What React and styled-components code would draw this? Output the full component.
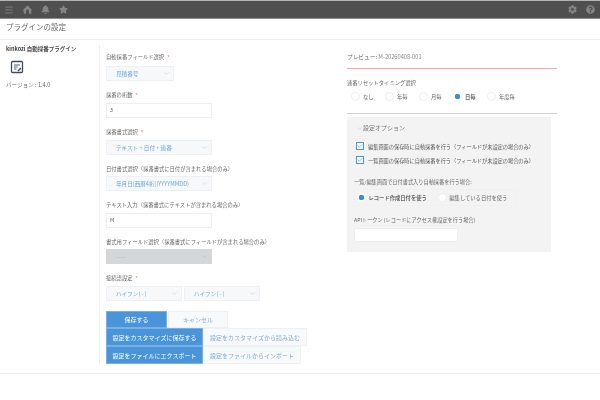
import React from "react";
import styled, { createGlobalStyle } from "styled-components";
import { Menu, ChevronDown, Check } from "lucide-react";
import { FaBell, FaStar, FaCog, FaQuestionCircle } from "react-icons/fa";

const Global = createGlobalStyle`
  html, body { margin: 0; padding: 0; background: #fff; }
  body { font-family: "Noto Sans CJK JP", "Noto Sans", sans-serif; color: #555; }
  * { box-sizing: border-box; }
`;

const Page = styled.div`width: 600px; height: 400px; overflow: hidden; background: #fff; filter: blur(0.3px);`;
const TopBar = styled.header`
  height: 19px; background: #4f4f4f; border-top: 1px solid #b5b5b5; border-bottom: 1px solid #8f8f8f;
  display: flex; align-items: center; justify-content: space-between; padding: 0 5px 0 4px; color: #858585;
`;
const IconGroup = styled.div`display: flex; align-items: center; gap: ${p => p.$gap}px;`;
const HomeGlyph = styled.svg`width: 9px; height: 9px; display: block; fill: #858585;`;
const TitleBar = styled.div`
  height: 21px; border-bottom: 1px solid #ececec; padding-left: 6px;
  font-size: 7.5px; line-height: 16px; color: #666;
`;
const Main = styled.div`display: flex; align-items: flex-start; height: 334px; border-bottom: 1px solid #ececec;`;
const Side = styled.aside`
  width: 100px; border-right: 1px solid #efefef; margin-top: 5px; padding: 0 0 0 6px; height: 319px;
`;
const PluginName = styled.div`font-size: 5.5px; font-weight: 700; color: #444; line-height: 9px;`;
const PluginIcon = styled.svg`display: block; margin: 6px 0 0 4px; width: 14px; height: 14px;`;
const Version = styled.div`font-size: 5.6px; color: #666; line-height: 8px; margin-top: 7px;`;
const Form = styled.section`width: 247px; padding: 13px 0 0 6px;`;
const Label = styled.div`font-size: 5.3px; line-height: 8px; color: #666; margin-top: ${p => p.$mt ?? 10}px;`;
const Req = styled.span`color: #f0524f; margin-left: 3px;`;
const SelectBox = styled.div`
  width: ${p => p.$w}px; height: 15px; margin-top: ${p => p.$mt ?? 3}px;
  background: ${p => p.$disabled ? "#d4d6d7" : "#f6f8fa"};
  border: 1px solid ${p => p.$disabled ? "#d4d6d7" : "#eef1f3"};
  color: ${p => p.$disabled ? "#b8bcbe" : "#6aa5dc"};
  font-size: 5.6px; display: flex; align-items: center; justify-content: space-between;
  padding: 0 3px 0 9px;
`;
const TextBox = styled.div`
  width: ${p => p.$w}px; height: 15px; margin-top: 4px; background: #fff; border: 1px solid #eceff1;
  font-size: 5.3px; line-height: 13px; padding-left: 3px; color: #555;
`;
const Row = styled.div`display: flex; gap: ${p => p.$gap ?? 0}px; margin-top: ${p => p.$mt ?? 0}px;`;
const Btn = styled.div`
  height: ${p => p.$h ?? 18}px; width: ${p => p.$w}px; font-size: 6px; display: flex; align-items: center; justify-content: center;
  background: ${p => p.$primary ? "#4a95da" : "#f7f9fa"};
  color: ${p => p.$primary ? "#fff" : "#79aee0"};
  border: 1px solid ${p => p.$primary ? "#79b0e3" : "#eef0f2"};
`;
const Right = styled.section`width: 210px; padding-top: 13px;`;
const Preview = styled.div`
  height: 16px; border-bottom: 1px solid #f9a5a3; font-size: 5.7px; line-height: 8px; color: #888;
`;
const PreviewKey = styled.span`color: #666;`;
const Radios = styled.div`display: flex; align-items: center; margin-top: 5px; padding-left: 4px;`;
const RadioItem = styled.div`
  display: flex; align-items: center; gap: ${p => p.$gap ?? 3}px; width: ${p => p.$w ?? "auto"}; font-size: 5.3px; color: #666; font-weight: ${p => p.$on ? 700 : 400};
`;
const RadioDot = styled.span`
  width: 9px; height: 9px; border-radius: 50%; display: block; background: #fff; border: 1px solid #eceeef;
  ${p => p.$on && `border: 0; background: radial-gradient(circle, #3d8fdd 0 2.6px, #fff 3px);`}
`;
const Divider = styled.div`height: 1px; background: #cfcfcf; margin-top: 12px;`;
const Panel = styled.div`
  width: 204px; height: 135px; margin-top: 3px; background: #f3f3f3; padding: 7px 6px 0;
`;
const Legend = styled.div`display: flex; align-items: center; gap: 0; font-size: 6px; color: #777; line-height: 8px; padding-left: 3px;`;
const CheckRow = styled.div`
  display: flex; align-items: center; gap: 4px; font-size: 5.2px; color: #555; margin-top: ${p => p.$mt}px; height: 8px; padding-left: 3px;
`;
const CheckBox = styled.span`
  width: 8px; height: 8px; border: 1px solid #4a95da; background: #fff; color: #4a95da; display: flex; align-items: center; justify-content: center;
`;
const PanelLabel = styled.div`font-size: 5.2px; line-height: 8px; color: #666; margin-top: ${p => p.$mt}px; padding-left: 1px;`;
const RadioPanel = styled.div`
  width: 164px; height: 17px; margin-top: 3px; border: 1px solid #f0f0f0; display: flex; align-items: center; gap: 11px; padding-left: 3px;
`;
const TokenInput = styled.div`width: 104px; height: 14px; margin: 4px 0 0 1px; background: #fff; border: 1px solid #eee;`;

const Select = ({ w, children, disabled, mt }) => (
  <SelectBox $w={w} $disabled={disabled} $mt={mt}>
    <span>{children}</span>
    <ChevronDown size={7} strokeWidth={1.5} color={disabled ? "#8fb5da" : "#9fc4e8"} />
  </SelectBox>
);

export default function App() {
  return (
    <Page>
      <Global />
      <TopBar>
        <IconGroup $gap={9}>
          <Menu size={10} strokeWidth={2} />
          <HomeGlyph viewBox="0 0 10 10"><path fillRule="evenodd" d="M5 .6 9.6 5 9 9.6H6.6V6.6a1.6 1.6 0 0 0-3.2 0v3H1L.4 5z" /></HomeGlyph>
          <FaBell size={9} />
          <FaStar size={9} />
        </IconGroup>
        <IconGroup $gap={9}>
          <FaCog size={9} />
          <FaQuestionCircle size={9} />
        </IconGroup>
      </TopBar>
      <TitleBar>プラグインの設定</TitleBar>
      <Main>
        <Side>
          <PluginName>kinkozi 自動採番プラグイン</PluginName>
          <PluginIcon viewBox="0 0 14 14">
            <rect x="1.5" y="1.5" width="11" height="11" rx="1" fill="#fff" stroke="#3c4a66" strokeWidth="1.3" />
            <path d="M4 5h6M4 7h3.5M4 9h2.5" stroke="#3c4a66" strokeWidth="0.9" />
            <path d="M7.5 10.5l3-3 1 1-3 3z" fill="#3c4a66" />
          </PluginIcon>
          <Version>バージョン : 1.4.0</Version>
        </Side>
        <Form>
          <Label $mt={0}>自動採番フィールド選択<Req>*</Req></Label>
          <Select w={68} mt={5}>見積番号</Select>
          <Label>採番の桁数<Req>*</Req></Label>
          <TextBox $w={106}>3</TextBox>
          <Label>採番書式選択<Req>*</Req></Label>
          <Select w={106} mt={4}>テキスト + 日付 + 連番</Select>
          <Label>日付書式選択（採番書式に日付が含まれる場合のみ）</Label>
          <Select w={106}>年月日[西暦4桁](YYYYMMDD)</Select>
          <Label>テキスト入力（採番書式にテキストが含まれる場合のみ）</Label>
          <TextBox $w={106}>M</TextBox>
          <Label>書式用フィールド選択（採番書式にフィールドが含まれる場合のみ）</Label>
          <Select w={106} disabled>-----</Select>
          <Label>接続語設定<Req>*</Req></Label>
          <Row $gap={2} $mt={4}>
            <Select w={76} mt={0}>ハイフン( - )</Select>
            <Select w={76} mt={0}>ハイフン( - )</Select>
          </Row>
          <Row $mt={10} $gap={1}>
            <Btn $primary $w={61} $h={17}>保存する</Btn>
            <Btn $w={60} $h={17}>キャンセル</Btn>
          </Row>
          <Row>
            <Btn $primary $w={97}>設定をカスタマイズに保存する</Btn>
            <Btn $w={104}>設定をカスタマイズから読み込む</Btn>
          </Row>
          <Row>
            <Btn $primary $w={97}>設定をファイルにエクスポート</Btn>
            <Btn $w={98}>設定をファイルからインポート</Btn>
          </Row>
        </Form>
        <Right>
          <Preview><PreviewKey>プレビュー: </PreviewKey>M-20260408-001</Preview>
          <Label>連番リセットタイミング選択</Label>
          <Radios>
            <RadioItem $w="34px"><RadioDot />なし</RadioItem>
            <RadioItem $w="34px"><RadioDot />年毎</RadioItem>
            <RadioItem $w="34px"><RadioDot />月毎</RadioItem>
            <RadioItem $w="34px" $on><RadioDot $on />日毎</RadioItem>
            <RadioItem $w="34px"><RadioDot />年度毎</RadioItem>
          </Radios>
          <Divider />
          <Panel>
            <Legend><ChevronDown size={7} strokeWidth={1} color="#aaa" />設定オプション</Legend>
            <CheckRow $mt={10}><CheckBox><Check size={6} strokeWidth={2.5} /></CheckBox>編集画面の保存時に自動採番を行う（フィールドが未設定の場合のみ）</CheckRow>
            <CheckRow $mt={6}><CheckBox><Check size={6} strokeWidth={2.5} /></CheckBox>一覧画面の保存時に自動採番を行う（フィールドが未設定の場合のみ）</CheckRow>
            <PanelLabel $mt={14}>一覧/編集画面で日付書式入り自動採番を行う場合:</PanelLabel>
            <RadioPanel>
              <RadioItem $on $gap={2.5}><RadioDot $on />レコード作成日付を使う</RadioItem>
              <RadioItem $gap={2.5}><RadioDot />編集している日付を使う</RadioItem>
            </RadioPanel>
            <PanelLabel $mt={10}>APIトークン (レコードにアクセス権設定を行う場合)</PanelLabel>
            <TokenInput />
          </Panel>
        </Right>
      </Main>
    </Page>
  );
}
